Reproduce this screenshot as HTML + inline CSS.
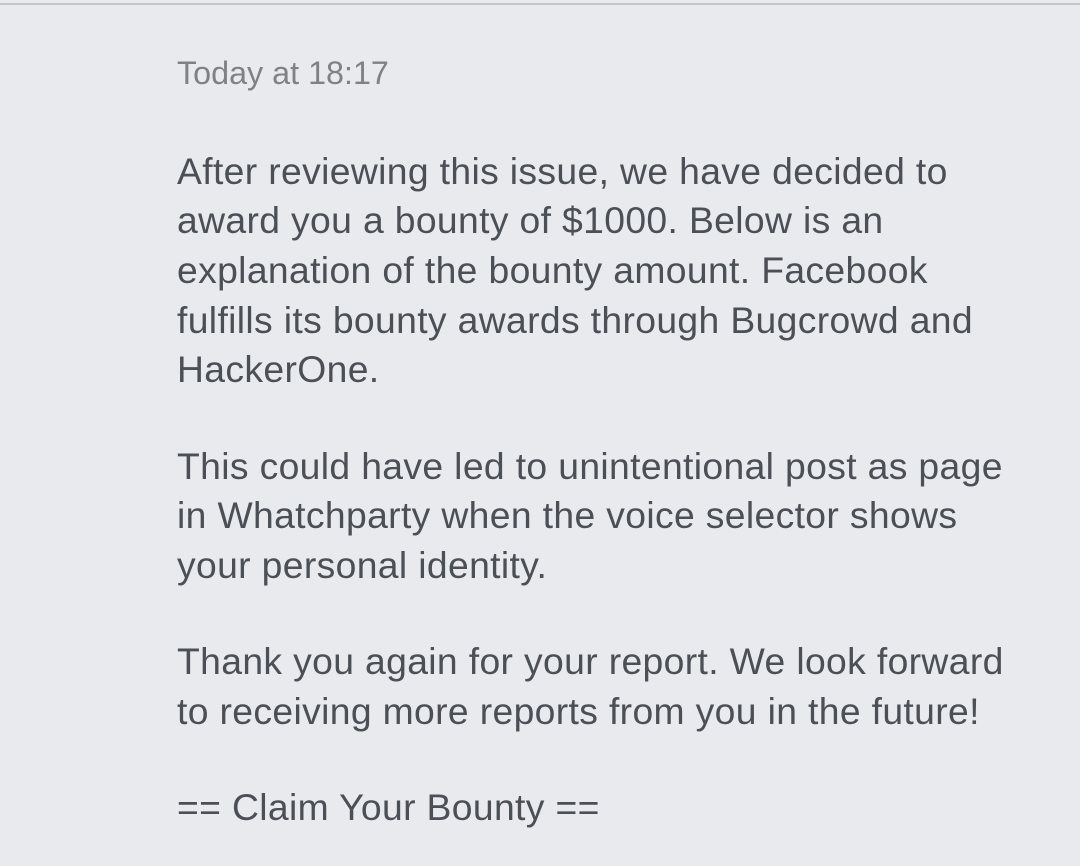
<!DOCTYPE html>
<html><head><meta charset="utf-8"><style>
html,body{margin:0;padding:0;width:1080px;height:866px;overflow:hidden;background:#e9eaee;}
.top{position:absolute;left:0;top:3px;width:1080px;height:2px;background:#c4c5c9;}
.l{position:absolute;left:177px;font-family:"Liberation Sans",sans-serif;font-size:37.3px;letter-spacing:0.35px;line-height:50px;height:50px;color:#4b4f56;white-space:nowrap;}
.t{font-size:32.3px;letter-spacing:0;color:#7f8186;}
</style></head><body>
<div class="top"></div>
<div class="l t" style="top:48px">Today at 18:17</div>
<div class="l" style="top:146px">After reviewing this issue, we have decided to</div>
<div class="l" style="top:195px">award you a bounty of $1000. Below is an</div>
<div class="l" style="top:245px">explanation of the bounty amount. Facebook</div>
<div class="l" style="top:295px">fulfills its bounty awards through Bugcrowd and</div>
<div class="l" style="top:344px">HackerOne.</div>
<div class="l" style="top:441px">This could have led to unintentional post as page</div>
<div class="l" style="top:490px">in Whatchparty when the voice selector shows</div>
<div class="l" style="top:540px">your personal identity.</div>
<div class="l" style="top:636px">Thank you again for your report. We look forward</div>
<div class="l" style="top:686px">to receiving more reports from you in the future!</div>
<div class="l" style="top:782px">== Claim Your Bounty ==</div>
</body></html>
